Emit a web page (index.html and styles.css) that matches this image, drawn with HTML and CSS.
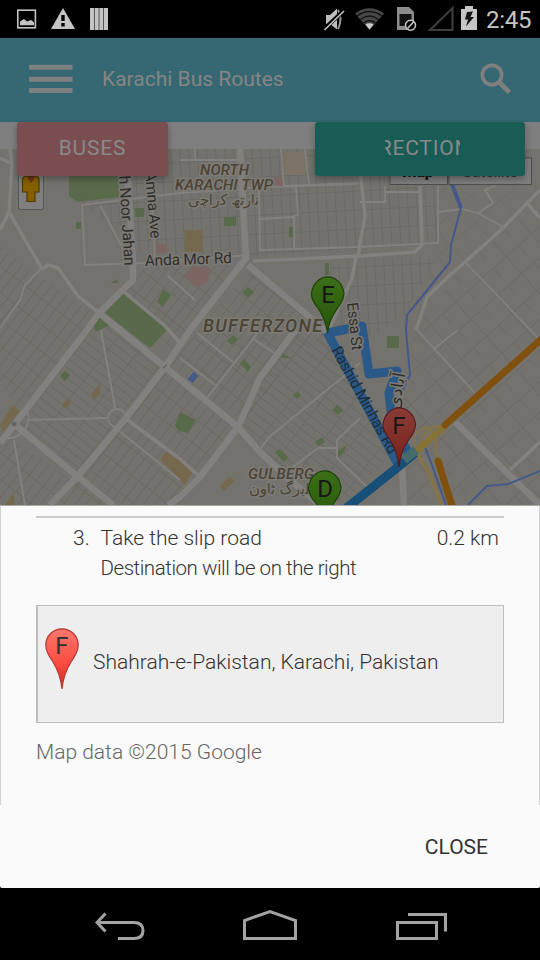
FILE: index.html
```html
<!DOCTYPE html>
<html lang="en">
<head>
<meta charset="utf-8">
<title>Karachi Bus Routes</title>
<link rel="stylesheet" href="styles.css">
</head>
<body>
<div class="phone">
  <header class="status">
    <svg class="status-icons" viewBox="0 0 120 38" width="120" height="38">
      <rect x="17.8" y="10.2" width="17.6" height="17.6" fill="none" stroke="#c4c4c4" stroke-width="1.6"/>
      <path d="M20 25.3v-3.8l4-2.5 3 2.5 4-1.5 3 2.5v2.8z" fill="#c4c4c4"/>
      <path d="M63 8 75 29H51z" fill="#c4c4c4"/>
      <path d="M63 15v6M63 23v3.5" stroke="#000" stroke-width="3.4"/>
      <path d="M90 8h18v22H90z" fill="#c4c4c4"/>
      <path d="M94.5 8v22M99 8v22M103.5 8v22" stroke="#555" stroke-width="1"/>
    </svg>
    <div class="status-right">
      <svg viewBox="320 0 160 38" width="160" height="38">
        <path d="M326 15h4l7-6.5v21L330 24h-4z" fill="#bdbdbd"/>
        <path d="M338 10q5 9 0 19" fill="none" stroke="#999" stroke-width="2"/>
        <path d="M323.5 29.5 344 10.5" stroke="#000" stroke-width="4"/>
        <path d="M324.5 30 344 11" stroke="#c8c8c8" stroke-width="1.5"/>
        <path d="M355 13.5Q369.500 3 384 13.500L369.500 30z" fill="#484848"/>
        <path d="M357 16q12.500-9 25 0M360.500 19.500q9-7 18 0M363.500 23q6-4.500 12 0" fill="none" stroke="#111" stroke-width="1.300"/>
        <path d="M365.500 24.500q4-2.500 8 0l-4 5z" fill="#ccc"/>
        <path d="M397 7h12l5 5v18h-17z" fill="#8c8c8c"/>
        <path d="M399.500 14h12v12h-12z" fill="#111"/>
        <circle cx="410.500" cy="25.300" r="5" fill="#000" stroke="#c8c8c8" stroke-width="1.500"/>
        <path d="m407.500 28.500 6-6.500" stroke="#c8c8c8" stroke-width="1.500"/>
        <path d="M430 30 452.500 8v22z" fill="none" stroke="#3d3d3d" stroke-width="2.200"/>
        <path d="M461 9h4V6h8v3h4v21h-16z" fill="#c6c6c6"/>
        <path d="m467 12 6-.5-2.500 5.500h3.500l-8 9.500 2-7h-3z" fill="#161616"/>
      </svg>
      <span class="clock">2:45</span>
    </div>
  </header>

  <div class="appbar">
    <svg class="menu" viewBox="0 0 44 30" width="44" height="30"><path d="M0 3.200h43.500M0 15.200h43.500M0 26.500h43.500" stroke="#7f7f7f" stroke-width="5"/></svg>
    <h1 class="title">Karachi Bus Routes</h1>
    <svg class="search" viewBox="0 0 32 32" width="32" height="32"><circle cx="12" cy="12" r="9.700" fill="none" stroke="#7f7f7f" stroke-width="3.700"/><path d="m18.500 18.500 11 11" stroke="#7f7f7f" stroke-width="4.600"/></svg>
  </div>

  <div class="toolbar">
    <button class="btn buses">BUSES</button>
    <button class="btn directions"><span>DIRECTIONS</span></button>
  </div>

  <svg class="map" viewBox="0 149 540 356" width="540" height="356">
    <defs>
      <pattern id="g1" width="21" height="9" patternUnits="userSpaceOnUse" patternTransform="rotate(-52)"><path d="M0 .5h21M.5 0v9" stroke="#6b6962" fill="none"/></pattern>
      <pattern id="g2" width="9" height="19" patternUnits="userSpaceOnUse" patternTransform="rotate(-3)"><path d="M0 .5h9M.5 0v19" stroke="#6b6963" fill="none"/></pattern>
      <pattern id="g3" width="25" height="8" patternUnits="userSpaceOnUse" patternTransform="rotate(38)"><path d="M0 .5h25M.5 0v8" stroke="#6b6963" fill="none"/></pattern>
      <pattern id="g4" width="34" height="23" patternUnits="userSpaceOnUse" patternTransform="rotate(-42)"><path d="M0 .5h34M.5 0v23M17 0v12" stroke="#6c6a64" fill="none"/></pattern>
      <linearGradient id="dg" x1="0" y1="0" x2="0" y2="1"><stop offset="0" stop-color="#3b7018"/><stop offset="1" stop-color="#265208"/></linearGradient>
      <linearGradient id="dr" x1="0" y1="0" x2="0" y2="1"><stop offset="0" stop-color="#8a3c36"/><stop offset="1" stop-color="#79201b"/></linearGradient>
    </defs>
    <rect y="149" width="540" height="356" fill="#74726d"/>
    <g class="blocks">
      <path d="M85 149H240L246 256 145 263 133 240 82 205z" fill="url(#g2)"/>
      <path d="M245 149H437V245L250 258z" fill="url(#g2)"/>
      <path d="M250 268 325 333 240 420 170 365z" fill="url(#g1)"/>
      <path d="M98 318 162 367 75 473 18 421z" fill="url(#g3)"/>
      <path d="M165 372 235 427 185 505H55z" fill="url(#g1)"/>
      <path d="M260 380 297 335 325 340 390 455 345 505 285 475 240 426z" fill="url(#g3)"/>
      <path d="M133 285 145 265H243L170 350 124 292z" fill="url(#g1)"/>
      <path d="M330 263 437 255 405 315 365 340 330 326z" fill="url(#g2)"/>
      <path d="M415 330 465 263 540 200V505H405V370z" fill="url(#g4)"/>
      <path d="M0 245 45 280 95 316 20 415 0 380zM0 430 70 480 45 505H0z" fill="url(#g1)"/>
      <path d="M440 186H540L464 260 425 295z" fill="url(#g4)" opacity=".6"/>
    </g>
    <g fill="#596a4a">
      <path d="M69 170h50v27l-27 3-15 2-8-6zM124 293l45 35-19 20-45-35zM93 319l12-3 7 8-17 8zM135 208h9v9h-9zM224 217h12v9h-12zM163 289l8 6-8 12-6-5zM60 376l5-5 5 4-5 6zM180 412l10 10-10 10-5-6zM240 363l4-4 7 8-3 5zM242 292l6-5 6 5-6 6zM227 341l6-6 5 4-6 6zM281 353l10 5h-9zM332 410l5-5 6 5-5 5zM293 395l5-3 3 3-4 4zM275 452l5-3 8 8-4 5zM387 336h12v12h-12zM315 442l7-5 3 5-7 4zM337 451l10-6-4 9-6 4zM325 263h4v12h-4zM289 227h4v10h-4zM76 222h5v7h-5zM111 283l6-4 1 4zM180 412l16 8-8 13-8-2z"/>
    </g>
    <g fill="#75684d"><path d="M185 230h17v22h-17zM160 459l8-9 26 20-9 15zM0 425l13-20 7 6-17 21zM220 486l10-10 4 5-10 10zM91 394l9-10v10l-5 5zM62 405l5-6 4 4-5 5zM5 505l9-13v13z"/></g>
    <path d="m185 276 8-10 17 2-2 14-12 5zM156 243l11 2v8l-11 1zM274 177h9v10h-9z" fill="#7c6562"/>
    <path d="M284 152h21v23h-20z" fill="#7d7467"/>
    <g class="roads thin">
      <path d="M40 270 25 285 20 300 0 328M180 193 82 205 85 265 145 263 248 255M100 205 130 262M152 195 155 263M167 275l28 25M29 420l78-2M101 330l14 78M14 440l11 65M118 430l62 50M252 338l25 17M260 330 207 398M197 333l36 29M180 358l35 27M360 363 268 438 260 450M360 418 337 440V458L370 490M337 448H318L293 467M465 262l75 78M438 212l24-3 16 4 25 14M478 213l15-10-8-13 45-20M281 149l3 37 75-3M305 149l4 37M296 187l2 28-4 1v32M259 219l35-2M259 187l1 63 100-3 78-4V186M385 186v16h-25M385 192h35M417 330l58 63M435 348l23-18M540 345 506 373M243 188l115-4M180 160h62M195 149v12M180 193l60-4"/>
      <circle cx="117" cy="418" r="9"/><path d="M27 411q5 14-8 24-6 5-15 2"/>
    </g>
    <g class="roads mid">
      <path d="M10 149 12 163 9 212 0 230M0 158l10 5M9 212l33 57 6-4 10 3 20 28 21 17M124 292l41 34 15 17M125 418l55 41 20 18M540 190 503 228 465 262 450 275 427 297 416 330M527 203l13 15M420 186l2 59-7 7-55 4-107 5M358 256l7-40-7-65M356 258l-4 20-24 54M540 442 510 470"/>
    </g>
    <g class="roads wide">
      <path d="M126 149 133 265V280L99 313 87 330 15 424 0 443M99 313 165 367 238 427 260 452 290 480 320 505M240 149l6 109-56 72-25 37-38 50-50 60-27 28M248 265l79 67M14 424l63 52 36 29M295 330 260 378 238 427 200 477 180 497 168 505M455 422l85 83M402 466l2 39"/>
    </g>
    <circle cx="14" cy="424" r="2.500" fill="#666"/><path d="m163 368 4-3" stroke="#555"/>
    <g class="river"><path d="M452 184l9 24" stroke-width="4"/><path d="M461 208 451 245 450 262 407 315 406 330 410 375 400 395M424 445 432 465 446 505M468 505 487 486 508 484 540 471" stroke-width="2"/><path d="M190 381l6-7" stroke-width="6"/></g>
    <g fill="none" stroke="#867449" stroke-width="2"><path d="M415 450 430 475 441 505" stroke-width="3.500"/><path d="M417 450q-8-22 12-22l17-3M420 446q3-14 10-17 8 10 5 19l4 14"/><path d="m445 426-36 32" stroke="#877336" stroke-width="6.500"/></g>
    <path d="m545 336-100 89M438 461l15 48" fill="none" stroke="#80500f" stroke-width="7" stroke-linecap="round"/>
    <g fill="none" stroke="#2a5988" stroke-width="9" stroke-linejoin="round"><path d="m328 333 34-7 7 48 28-3-8 22 3 27 17 35M327 332 399 466"/><path d="m415 453-17 14-54 43" stroke="#184f79"/><path d="m416 450-12 10" stroke="#456c6b"/></g>

    <g class="labels">
      <g class="area">
        <text x="200" y="174.500" textLength="49">NORTH</text>
        <text x="175" y="189.500" textLength="98">KARACHI TWP</text>
        <text x="188" y="205" textLength="71" class="urdu">نارتھ کراچی</text>
        <text x="203" y="332" textLength="119" class="big">BUFFERZONE</text>
        <text x="248" y="479" textLength="66">GULBERG</text>
        <text x="249" y="494" textLength="68" class="urdu">گلبرگ ٹاون</text>
      </g>
      <g class="street">
        <text transform="translate(145 266) rotate(-2)" textLength="87">Anda Mor Rd</text>
        <text transform="translate(119 176) rotate(86.500)" textLength="90">h Noor Jahan</text>
        <text transform="translate(145 172) rotate(85)" textLength="67">Amna Ave</text>
        <text transform="translate(347 303) rotate(84)" textLength="48">Essa St</text>
        <text transform="translate(331 350) rotate(61)" textLength="120" class="on-route">Rashid Minhas Rd</text>
        <text transform="translate(399 410) rotate(-80)" textLength="37" class="urdu">آبادی</text>
      </g>
    </g>

    <path d="M327.500 333Q326 320 318 308 311 300 311.500 293A16.500 19.500 0 0 1 344 293Q344 300 337 309 329 320 327.500 333z" fill="url(#dg)" stroke="#1d4109" stroke-width="1.200"/>
    <path d="M324.500 527Q323 514 315 502 308 494 308.500 487A16.500 19.500 0 0 1 341 487Q341 494 334 503 326 514 324.500 527z" fill="url(#dg)" stroke="#1d4109" stroke-width="1.200"/>
    <path d="M399 467Q397.500 451 389.500 439 382.500 431 383 424A16.500 19.500 0 0 1 415.500 424Q415.500 431 408.500 440 400.500 451 399 467z" fill="url(#dr)" stroke="#551d1a" stroke-width="1.200"/>
    <g class="pin-letter"><text x="328" y="303">E</text><text x="325" y="497">D</text><text x="399" y="434">F</text></g>

    <rect x="18.500" y="160" width="25" height="49.500" rx="2" fill="#7f7f7f" stroke="#555"/>
    <path d="M22.500 179.500q0-3 3-3h10.500q3 0 3 3V192h-4v9.500h-8V192h-4.500z" fill="#856000" stroke="#513900" stroke-width="1.200"/>
    <path d="m27 177 4 6 4-6z" fill="#71301f"/>
    <path d="M390 158h57.500v26.500H390zM449 158h82.500v26.500H449z" fill="#7e7e7e" stroke="#4d4d4d" stroke-width="1"/>
    <text x="402" y="176.500" class="map-type bold" textLength="32">Map</text><text x="462" y="176.500" class="map-type" textLength="56">Satellite</text>
  </svg>

  <section class="dialog">
    <div class="scroll">
      <div class="step">
        <span class="num">3.</span>
        <div class="desc">Take the slip road<br><span class="dest">Destination will be on the right</span></div>
        <span class="dist">0.2 km</span>
      </div>
      <div class="place">
        <svg class="pin" viewBox="0 0 34 62" width="34" height="62">
          <defs><linearGradient id="lr" x1="0" y1="0" x2="0" y2="1"><stop offset="0" stop-color="#ff776c"/><stop offset=".6" stop-color="#f84a40"/><stop offset="1" stop-color="#c92820"/></linearGradient></defs>
          <path d="M17 61Q15.500 46 8 34 .8 24 .8 17A16.200 16.200 0 0 1 33.200 17Q33.200 24 26 34 18.500 46 17 61z" fill="url(#lr)" stroke="#b23a33" stroke-width="1.200"/>
          <text x="17" y="26" class="letter">F</text>
        </svg>
        <span class="addr">Shahrah-e-Pakistan, Karachi, Pakistan</span>
      </div>
      <p class="legal">Map data ©2015 Google</p>
    </div>
    <div class="actions"><button class="close">CLOSE</button></div>
  </section>

  <nav class="nav">
    <svg viewBox="0 0 540 72" width="540" height="72" fill="none" stroke="#a3a3a3" stroke-width="3">
      <path d="M97 34.500h37q9 0 9 8t-9 8h-16M105.500 25.500 97 34.500l8.500 9"/>
      <path d="M244.500 50.500v-18l25.500-9 25.500 9v18z"/>
      <path d="M397.500 34.500h39v16h-39zM408 26.500h37.500v17"/>
    </svg>
  </nav>
</div>
</body>
</html>
```

FILE: styles.css
```css
* { box-sizing: border-box; }
body { margin: 0; background: #000; font-family: Roboto, "Noto Sans", sans-serif; }
button { font-family: inherit; border: 0; padding: 0; }
svg { display: block; }
.phone { width: 540px; height: 960px; display: flex; flex-direction: column; overflow: hidden; }

.status { height: 38px; flex: none; display: flex; justify-content: space-between; background: #000; }
.status-right { display: flex; align-items: center; width: 220px; }
.clock { color: #c6c6c6; font-size: 24px; line-height: 38px; margin-left: 6px; padding-top: 2px; letter-spacing: -.3px; }

.appbar { height: 84px; flex: none; display: flex; align-items: center; padding: 0 28px 2px 29px; background: #356872; box-shadow: 0 2px 7px rgba(0, 0, 0, .35); position: relative; z-index: 1; }
.title { margin: 0 auto 0 29px; font-size: 21px; font-weight: 400; color: #858585; line-height: 30px; }

.toolbar { height: 27px; flex: none; display: flex; justify-content: space-between; align-items: flex-start; padding: 0 15px 0 17px; background: #7f7f7f; position: relative; z-index: 2; }
.btn { height: 54px; flex: none; border-radius: 3px; color: #898989; font-size: 21px; letter-spacing: .8px; display: flex; align-items: center; justify-content: center; padding-bottom: 3px; box-shadow: 0 3px 7px rgba(0, 0, 0, .32); }
.buses { width: 151px; background: #7a4e50; }
.directions { width: 210px; background: #185c55; }
.directions span { width: 75px; overflow: hidden; display: flex; justify-content: center; margin-left: 5px; padding-right: 4px; }

.map { flex: none; }
.roads { fill: none; stroke: #82817f; stroke-linejoin: round; }
.thin { stroke-width: 1.8; }
.mid { stroke-width: 3.5; }
.wide { stroke-width: 6.5; }
.river { fill: none; stroke: #44598a; }
.labels text { paint-order: stroke; stroke: #7d7b76; stroke-width: 3px; stroke-linejoin: round; }
.area text { fill: #4b4334; font-size: 15px; font-style: italic; font-weight: 500; }
.area .big { font-size: 18px; }
.area .urdu { font: 15px "DejaVu Sans", sans-serif; }
.street text { fill: #302e2b; font-size: 15.5px; }
.street .on-route { stroke-width: 0; fill: #1f2d3b; }
.street .urdu { font: 17px "DejaVu Sans", sans-serif; }
.pin-letter text { fill: #171717; font-size: 24px; text-anchor: middle; }
.map-type { font-size: 17px; fill: #383838; }
.bold { font-weight: 700; fill: #111; }

.dialog { height: 383px; flex: none; background: #fafafa; border-radius: 0 0 2px 2px; display: flex; flex-direction: column; color: #333; font-weight: 300; font-size: 21px; }
.scroll { height: 300px; padding: 10px 35px 0; border: 1px solid #d2d2d2; border-top-color: #aaa8a4; border-bottom: 0; }
.step { height: 89px; border-top: 2px solid #cbcbcb; display: flex; line-height: 30px; padding: 5px 5px 0 37px; }
.num { width: 27.5px; }
.desc { flex: 1; white-space: nowrap; }
.dest { font-size: 20.5px; letter-spacing: -.45px; }
.place { height: 118px; border: 1px solid #bdbdbd; border-left-width: 2px; background: #eee; display: flex; align-items: center; padding-left: 6.5px; }
.pin { margin-bottom: 11px; }
.letter { font-size: 24px; font-weight: 400; fill: #333; text-anchor: middle; }
.addr { margin-left: 14.5px; margin-bottom: 4px; }
.legal { margin: 14px 0 0; line-height: 30px; color: #666; }
.actions { flex: 1; display: flex; justify-content: flex-end; padding: 26px 52px 0 0; }
.close { height: 32px; background: none; color: #333; font-size: 21px; }
.nav { height: 72px; flex: none; background: #000; }
```
